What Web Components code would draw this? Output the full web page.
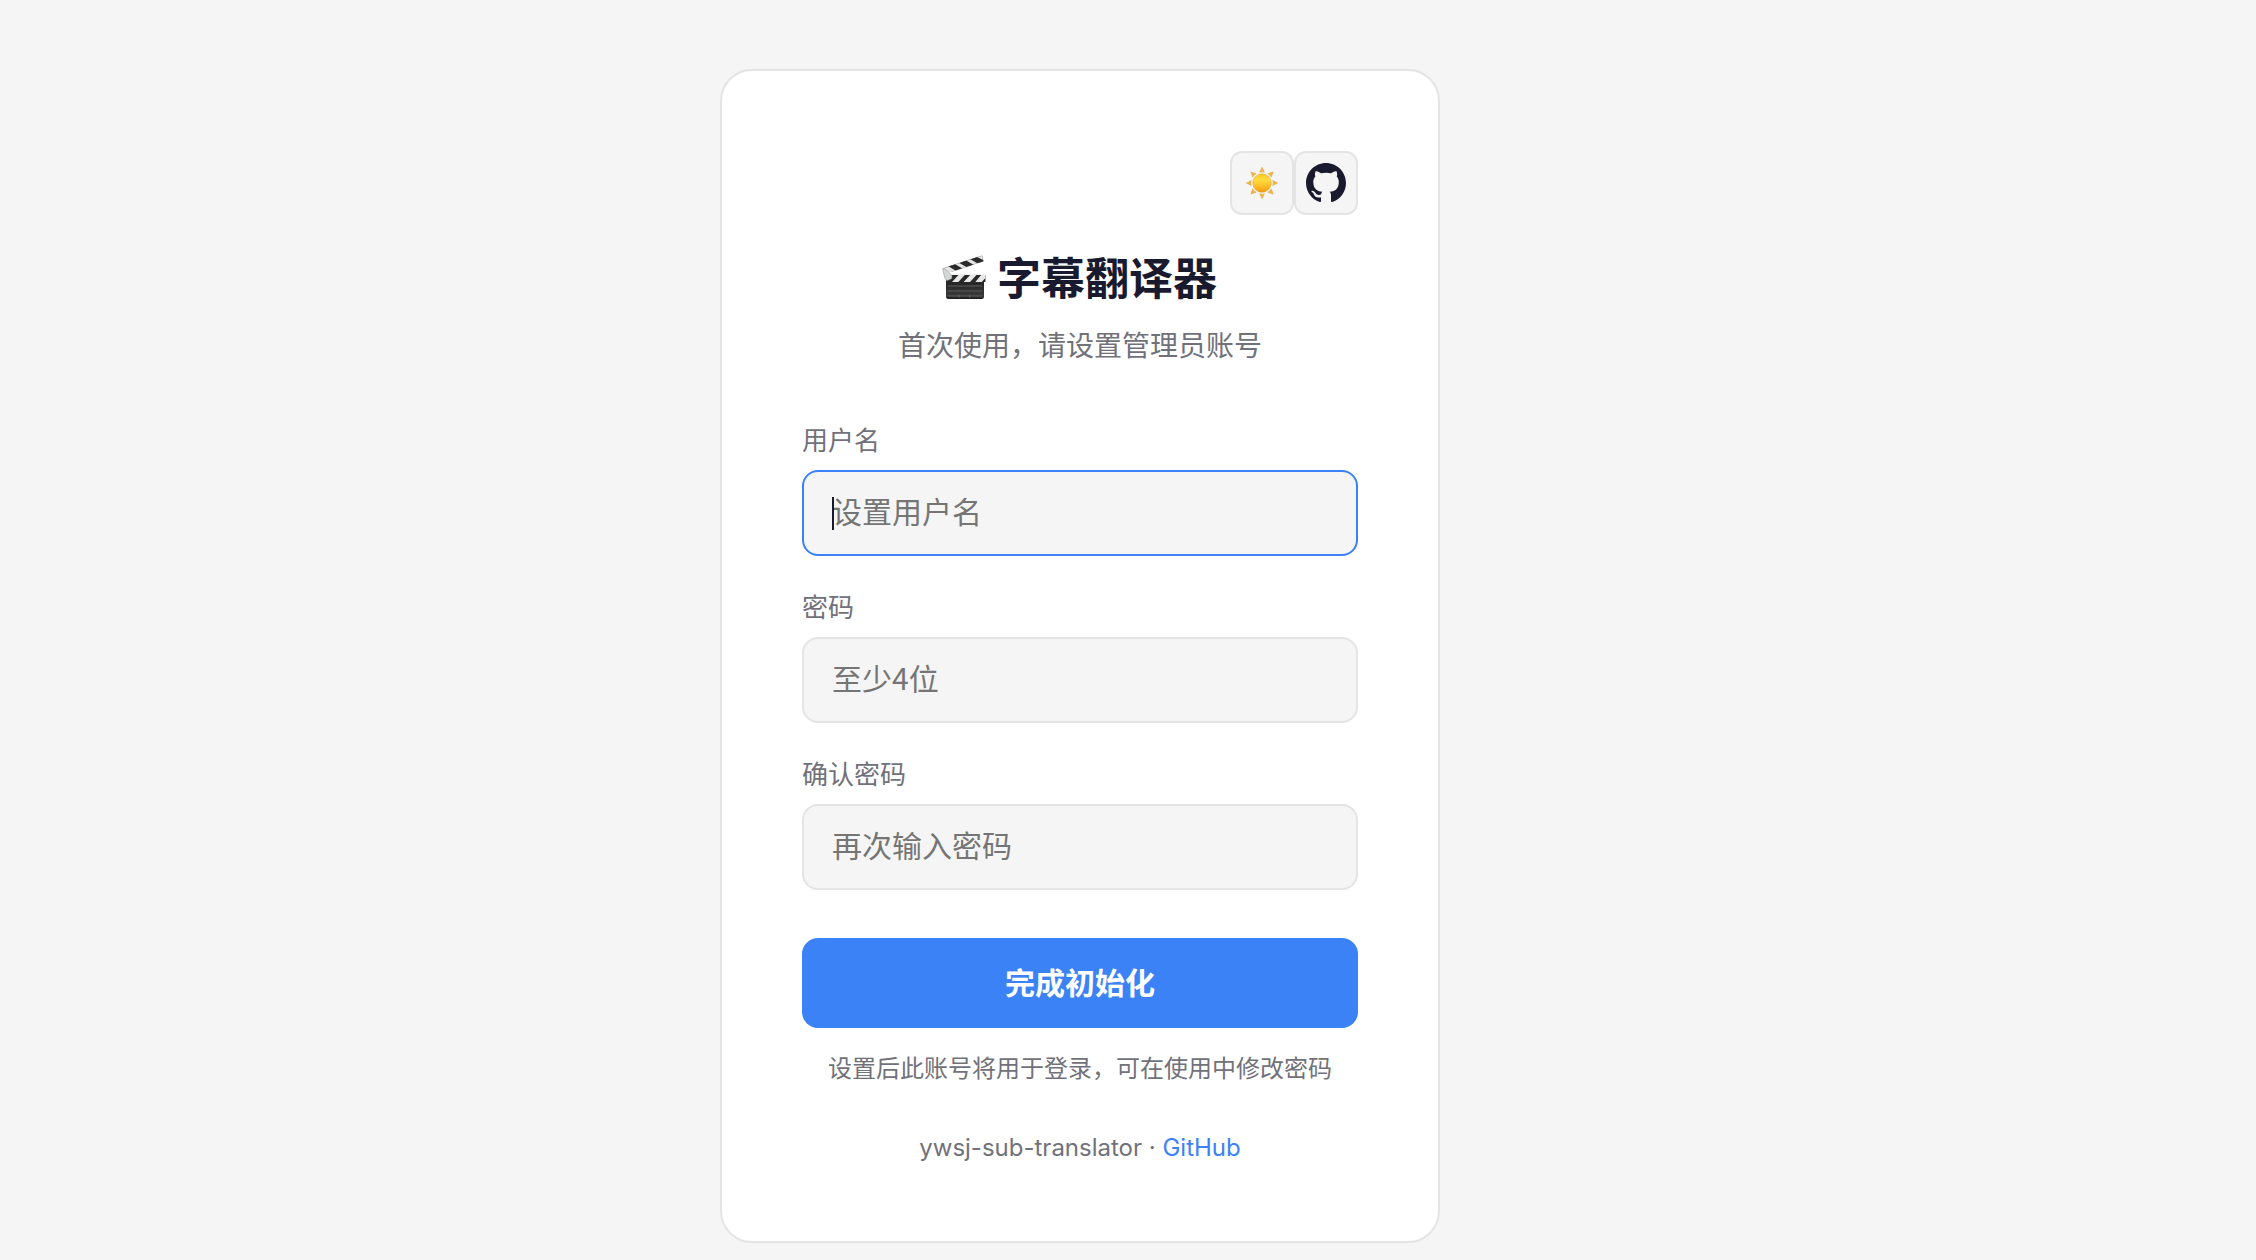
<!DOCTYPE html>
<html lang="zh-CN">
<head>
<meta charset="utf-8">
<title>字幕翻译器</title>
<style>
  :root {
    --bg: #f5f5f5;
    --border: #e4e4e4;
    --text: #1a1a2e;
    --muted: #71717a;
    --accent: #3b82f6;
  }
  body {
    margin: 0;
    min-height: 1260px;
    background: var(--bg);
    color: var(--text);
    font-family: Inter, "Noto Sans CJK SC", sans-serif;
  }
</style>
</head>
<body>
<setup-page></setup-page>
<script>
class IconButton extends HTMLElement {
  constructor() {
    super();
    this.attachShadow({ mode: "open" });
    this.shadowRoot.innerHTML = `
      <style>
        :host { display: block; }
        button {
          display: flex;
          align-items: center;
          justify-content: center;
          box-sizing: border-box;
          width: 64px;
          height: 64px;
          padding: 0;
          border: 2px solid var(--border);
          border-radius: 12px;
          background: var(--bg);
          color: var(--text);
        }
      </style>
      <button type="button"><slot></slot></button>`;
  }
}

class SunIcon extends HTMLElement {
  constructor() {
    super();
    this.attachShadow({ mode: "open" });
    const rays = [0, 45, 90, 135, 180, 225, 270, 315]
      .map((angle) => `<path d="M16 .3 18.4 5.3Q16 4.2 13.6 5.3Z" transform="rotate(${angle} 16 16)"/>`)
      .join("");
    this.shadowRoot.innerHTML = `
      <style>
        :host { display: block; height: 32px; }
        svg { display: block; }
      </style>
      <svg width="32" height="32" viewBox="0 0 32 32">
        <defs>
          <linearGradient id="disc" x1="0" y1="0" x2="0" y2="1">
            <stop offset="0" stop-color="#ffc928"/>
            <stop offset=".35" stop-color="#ffdb3d"/>
            <stop offset=".75" stop-color="#fdb622"/>
            <stop offset="1" stop-color="#ee980f"/>
          </linearGradient>
        </defs>
        <g fill="#f5b62f" stroke="#dda95c" stroke-width=".6">${rays}</g>
        <circle cx="16" cy="16" r="9.2" fill="url(#disc)" stroke="#eaa52b" stroke-width=".6"/>
      </svg>`;
  }
}

class GithubIcon extends HTMLElement {
  constructor() {
    super();
    this.attachShadow({ mode: "open" });
    this.shadowRoot.innerHTML = `
      <style>
        :host { display: block; height: 40px; }
        svg { display: block; }
      </style>
      <svg width="40" height="40" viewBox="0 0 16 16" fill="currentColor">
        <path d="M8 0C3.58 0 0 3.58 0 8c0 3.54 2.29 6.53 5.47 7.59.4.07.55-.17.55-.38 0-.19-.01-.82-.01-1.49-2.01.37-2.53-.49-2.69-.94-.09-.23-.48-.94-.82-1.13-.28-.15-.68-.52-.01-.53.63-.01 1.08.58 1.23.82.72 1.21 1.87.87 2.33.66.07-.52.28-.87.51-1.07-1.78-.2-3.64-.89-3.64-3.95 0-.87.31-1.59.82-2.15-.08-.2-.36-1.02.08-2.12 0 0 .67-.21 2.2.82.64-.18 1.32-.27 2-.27s1.36.09 2 .27c1.53-1.04 2.2-.82 2.2-.82.44 1.1.16 1.92.08 2.12.51.56.82 1.27.82 2.15 0 3.07-1.87 3.75-3.65 3.95.29.25.54.73.54 1.48 0 1.07-.01 1.93-.01 2.2 0 .21.15.46.55.38A8.01 8.01 0 0 0 16 8c0-4.42-3.58-8-8-8z"/>
      </svg>`;
  }
}

class ClapperIcon extends HTMLElement {
  constructor() {
    super();
    this.attachShadow({ mode: "open" });
    this.shadowRoot.innerHTML = `
      <style>
        :host { display: block; height: 45px; margin-bottom: 4px; }
        svg { display: block; }
      </style>
      <svg width="44" height="45" viewBox="0 0 132 135">
        <defs>
          <linearGradient id="slate" x1="0" y1="0" x2="0" y2="1">
            <stop offset="0" stop-color="#222"/>
            <stop offset=".8" stop-color="#383838"/>
            <stop offset="1" stop-color="#1c1c1c"/>
          </linearGradient>
          <clipPath id="arm"><path d="M2 40 121 1 125 19 28 51 10 54Z"/></clipPath>
          <clipPath id="bar"><path d="M12 59H131V81H12Z"/></clipPath>
        </defs>
        <g clip-path="url(#arm)">
          <path fill="#e4e4e4" d="M0 0H132V60H0Z"/>
          <path fill="#292929" d="M18 33 38 27 64 42 44 49ZM51 23 71 16 97 31 77 38ZM84 12 104 5 130 19 110 27Z"/>
          <path fill="none" stroke="#555" stroke-width="1.5" d="M2 40 121 1 125 19 28 51"/>
        </g>
        <!-- body of the slate -->
        <path fill="url(#slate)" d="M12 75H126V125Q126 132 119 132H19Q12 132 12 125Z"/>
        <g clip-path="url(#bar)">
          <path fill="#292929" d="M12 59H131V81H12Z"/>
          <path fill="#e8e8e8" d="M50 59H69L49 81H30ZM85 59H104L84 81H65ZM118 59H131V68L119 81H100Z"/>
        </g>
        <path fill="#d3d7d8" stroke="#8c8c8c" stroke-width="1.5" d="M2 41 12 44 30 62 29 71 14 77 8 68Z"/>
        <path fill="none" stroke="#777" stroke-width="2" d="M17 93H121M17 108H121M17 123H121M51 119V128M83 119V128"/>
      </svg>`;
  }
}

class FormField extends HTMLElement {
  constructor() {
    super();
    this.attachShadow({ mode: "open" });
    this.shadowRoot.innerHTML = `
      <style>
        :host { display: block; }
        label {
          display: block;
          margin-bottom: 9px;
          color: var(--muted);
          font-size: 26px;
          line-height: 40px;
        }
        .control {
          position: relative;
        }
        input {
          display: block;
          box-sizing: border-box;
          width: 100%;
          height: 86px;
          padding: 0 28px 6px;
          border: 2px solid var(--border);
          border-radius: 16px;
          outline: none;
          background: var(--bg);
          color: var(--text);
          font: inherit;
          font-family: "Noto Sans CJK SC", sans-serif;
          font-size: 30px;
        }
        input::placeholder { color: #757575; opacity: 1; }
        .caret { display: none; }
        :host([active]) input { border-color: var(--accent); }
        :host([active]) .caret {
          display: block;
          position: absolute;
          left: 30px;
          top: 27px;
          width: 2px;
          height: 33px;
          background: var(--text);
        }
      </style>
      <label for="input">${this.getAttribute("label")}</label>
      <div class="control">
        <input id="input" type="${this.getAttribute("type") || "text"}" placeholder="${this.getAttribute("placeholder")}">
        <span class="caret"></span>
      </div>`;
  }
}

class PrimaryButton extends HTMLElement {
  constructor() {
    super();
    this.attachShadow({ mode: "open" });
    this.shadowRoot.innerHTML = `
      <style>
        :host { display: block; }
        button {
          display: block;
          width: 100%;
          height: 90px;
          padding: 0 0 4px;
          border: 0;
          border-radius: 16px;
          background: var(--accent);
          color: #fff;
          font: inherit;
          font-size: 30px;
          font-weight: 600;
        }
      </style>
      <button type="submit"><slot></slot></button>`;
  }
}

class SetupPage extends HTMLElement {
  constructor() {
    super();
    this.attachShadow({ mode: "open" });
    this.shadowRoot.innerHTML = `
      <style>
        :host {
          display: flex;
          justify-content: center;
          padding-top: 69px;
          padding-right: 96px;
        }
        .card {
          box-sizing: border-box;
          width: 720px;
          height: 1174px;
          padding: 80px;
          border: 2px solid var(--border);
          border-radius: 32px;
          background: #fff;
        }
        .actions {
          display: flex;
          justify-content: flex-end;
        }
        h1 {
          display: flex;
          align-items: center;
          justify-content: center;
          gap: 11px;
          margin: 32px 0 14px;
          padding-right: 1px;
          font-size: 44px;
          font-weight: 700;
          line-height: 64px;
        }
        p {
          margin: 0;
          color: var(--muted);
          text-align: center;
        }
        .subtitle {
          font-size: 28px;
          line-height: 42px;
        }
        form {
          display: flex;
          flex-direction: column;
          gap: 32px;
          margin-top: 54px;
        }
        primary-button { margin-top: 16px; }
        .hint {
          margin-top: 24px;
          font-size: 24px;
          line-height: 34px;
        }
        .footer {
          margin-top: 45px;
          font-size: 24px;
          line-height: 34px;
        }
        a { color: var(--accent); text-decoration: none; }
      </style>
      <main class="card">
        <div class="actions">
          <icon-button><sun-icon></sun-icon></icon-button>
          <icon-button><github-icon></github-icon></icon-button>
        </div>
        <h1><clapper-icon></clapper-icon><span>字幕翻译器</span></h1>
        <p class="subtitle">首次使用，请设置管理员账号</p>
        <form>
          <form-field label="用户名" placeholder="设置用户名" active></form-field>
          <form-field label="密码" placeholder="至少4位" type="password"></form-field>
          <form-field label="确认密码" placeholder="再次输入密码" type="password"></form-field>
          <primary-button>完成初始化</primary-button>
        </form>
        <p class="hint">设置后此账号将用于登录，可在使用中修改密码</p>
        <p class="footer">ywsj-sub-translator · <a href="#">GitHub</a></p>
      </main>`;
  }
}

customElements.define("icon-button", IconButton);
customElements.define("sun-icon", SunIcon);
customElements.define("github-icon", GithubIcon);
customElements.define("clapper-icon", ClapperIcon);
customElements.define("form-field", FormField);
customElements.define("primary-button", PrimaryButton);
customElements.define("setup-page", SetupPage);
</script>
</body>
</html>
